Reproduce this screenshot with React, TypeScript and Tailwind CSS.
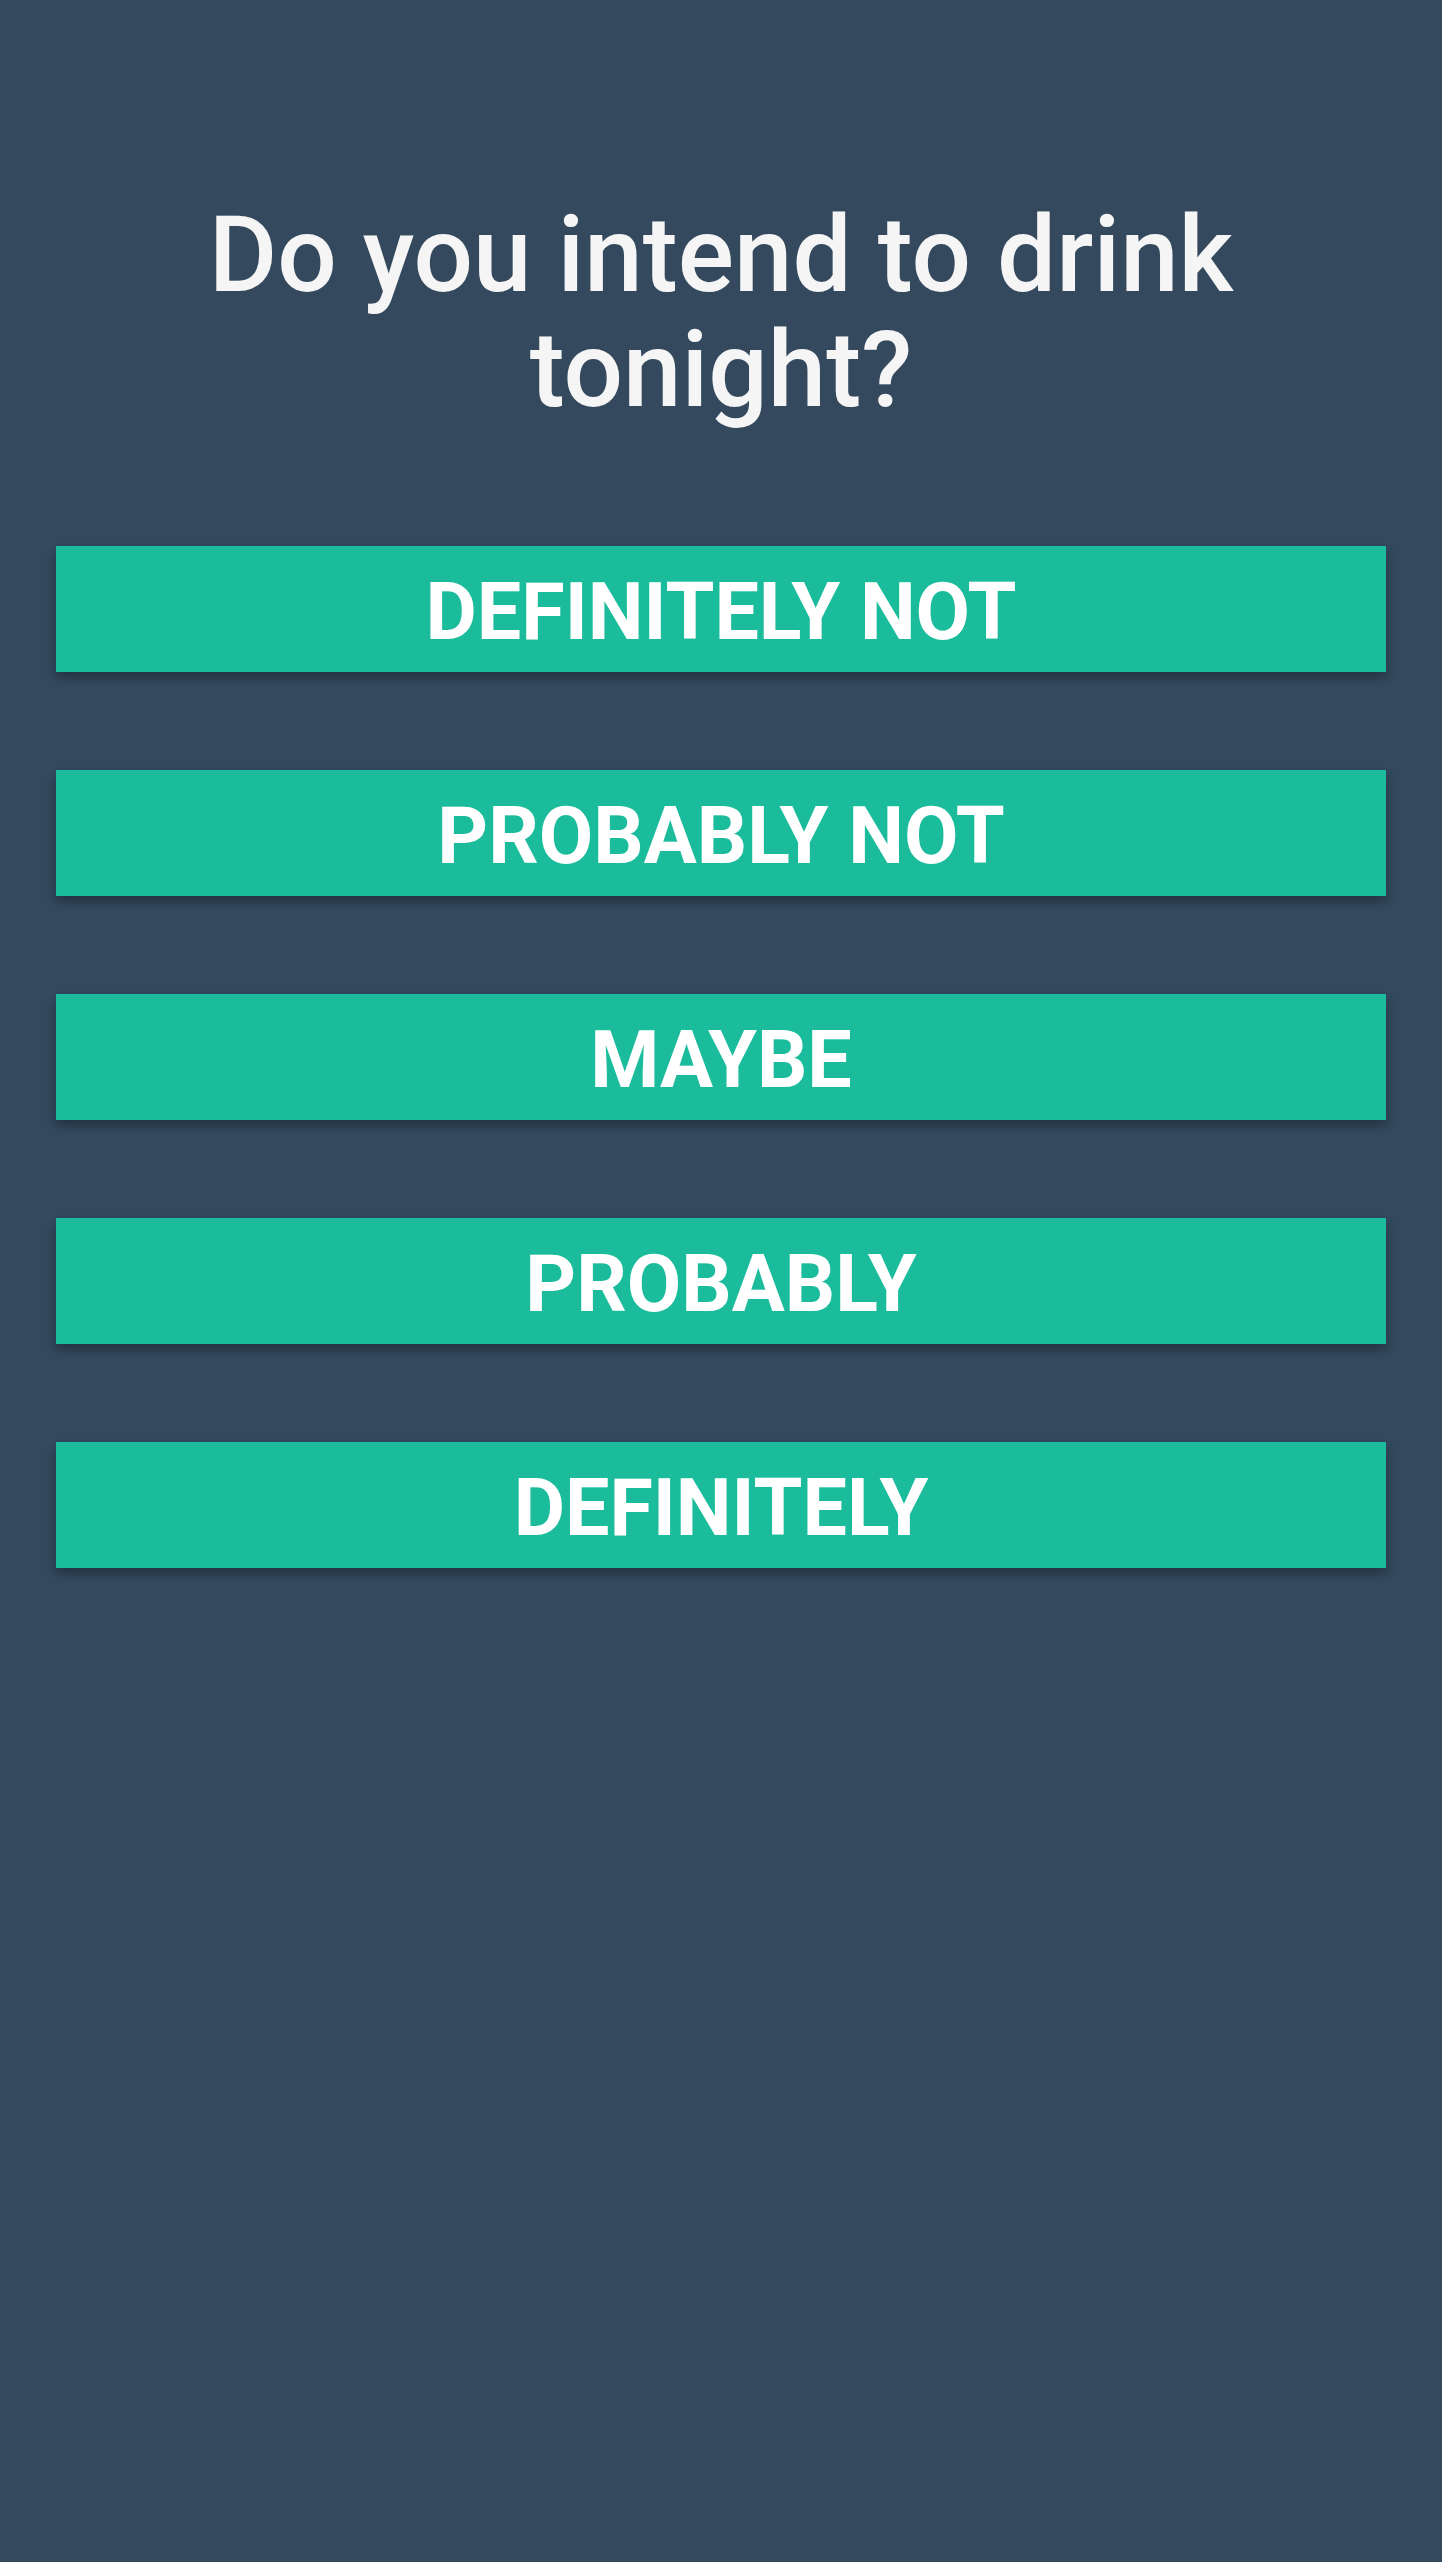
import React from 'react';

const options = ['DEFINITELY NOT', 'PROBABLY NOT', 'MAYBE', 'PROBABLY', 'DEFINITELY'];

export default function App() {
    return (
        <div className="min-h-screen bg-[#34495e] px-[56px] pt-[198px]" style={{ fontFamily: 'Roboto, "Noto Sans", sans-serif' }}>
            <h1 className="text-center text-[105px] leading-[115px] font-medium text-[#f5f5f5]">
                Do you intend to drink tonight?
            </h1>
            <div className="mt-[118px] flex flex-col gap-[98px]">
                {options.map((opt) => (
                    <button
                        key={opt}
                        className="h-[126px] w-full bg-[#1abc9c] pt-[6px] text-white text-[79px] font-bold leading-none shadow-[0_6px_10px_rgba(0,0,0,0.3)]"
                    >
                        {opt}
                    </button>
                ))}
            </div>
        </div>
    );
}
